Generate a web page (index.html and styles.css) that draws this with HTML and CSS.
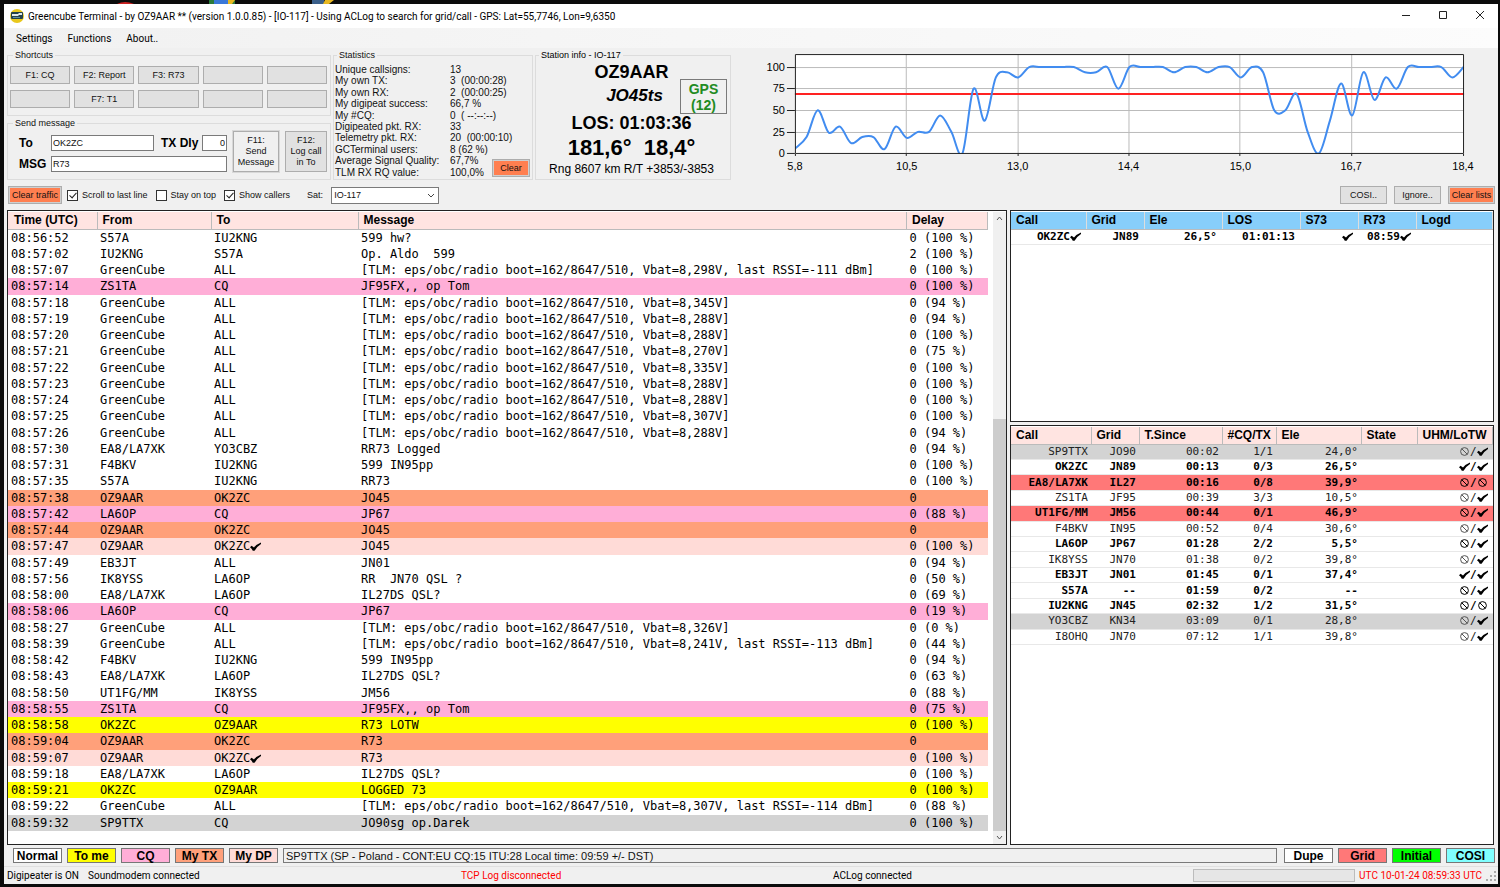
FILE: index.html
```html
<!DOCTYPE html>
<html lang="en">
<head>
    <meta charset="UTF-8">
    <title>Greencube Terminal</title>
    <link rel="stylesheet" href="styles.css">
</head>
<body>

<svg class="desktop-icons" width="400" height="4" viewBox="0 0 400 4" aria-hidden="true">
    <path d="M117 4q8-4 17 0z" fill="#c22"/>
    <path d="M209 0h26v4h-26z" fill="#2a7a3a"/>
    <path d="M214 0h14v4h-14z" fill="#3a78d8"/>
    <path d="M228 0h7l-3 4h-4z" fill="#e8b820"/>
    <path d="M312 0h12v4h-12z" fill="#3a5f8a"/>
    <path d="M325 0h9l-5 4h-6z" fill="#e8b820"/>
</svg>

<svg class="symbols" aria-hidden="true">
    <symbol id="check" viewBox="0 0 11 9">
        <path d="M0 5.200 1.600 3.800 4 5.400Q6.500 2.200 11 0.400V2Q7 4.400 4.600 8.800H2.800Q1.800 6.600 0 5.200z" fill="#000"/>
    </symbol>
    <symbol id="no" viewBox="0 0 11 9">
        <circle cx="5.500" cy="4.500" r="3.900" fill="none" stroke="currentColor"/>
        <path d="M2.800 1.800l5.400 5.400" stroke="currentColor"/>
    </symbol>
</svg>

<div class="window">
    <header class="titlebar">
        <svg class="app-icon" width="14" height="14" viewBox="0 0 14 14" aria-hidden="true">
            <circle cx="7" cy="7" r="7" fill="#e9c81c"/>
            <rect x="1" y="3" width="12" height="7" rx="1" fill="#24424c"/>
            <path d="M2 5h6l1-1h3v2H9l-1 1H2z" fill="#dfe8ea"/>
            <path d="M3 8h7v1H3z" fill="#5b8ca0"/>
        </svg>
        <h1>Greencube Terminal - by OZ9AAR ** (version 1.0.0.85) - [IO-117] - Using ACLog to search for grid/call - GPS: Lat=55,7746, Lon=9,6350</h1>
        <div class="window-buttons">
            <button type="button" aria-label="Minimize"><svg width="10" height="10" viewBox="0 0 10 10"><path d="M1 5.500h8"/></svg></button>
            <button type="button" aria-label="Maximize"><svg width="10" height="10" viewBox="0 0 10 10"><path d="M1.500 1.500h7v7h-7z"/></svg></button>
            <button type="button" aria-label="Close"><svg width="10" height="10" viewBox="0 0 10 10"><path d="M1 1l8 8M9 1l-8 8"/></svg></button>
        </div>
    </header>

    <nav class="menubar">
        <button type="button">Settings</button>
        <button type="button">Functions</button>
        <button type="button">About..</button>
    </nav>

    <section class="top">
        <div class="forms">
            <fieldset class="shortcuts">
                <legend>Shortcuts</legend>
                <button type="button">F1: CQ</button>
                <button type="button">F2: Report</button>
                <button type="button">F3: R73</button>
                <button type="button" aria-label="F4"></button>
                <button type="button" aria-label="F5"></button>
                <button type="button" aria-label="F6"></button>
                <button type="button">F7: T1</button>
                <button type="button" aria-label="F8"></button>
                <button type="button" aria-label="F9"></button>
                <button type="button" aria-label="F10"></button>
            </fieldset>

            <fieldset class="send">
                <legend>Send message</legend>
                <div class="send-fields">
                    <label for="to">To</label>
                    <input type="text" id="to" value="OK2ZC">
                    <label for="delay">TX Dly</label>
                    <input type="text" id="delay" value="0">
                    <label for="msg">MSG</label>
                    <input type="text" id="msg" value="R73">
                </div>
                <button type="button" class="send-btn">F11:<br>Send<br>Message</button>
                <button type="button" class="log-btn">F12:<br>Log call<br>in To</button>
            </fieldset>
        </div>

        <fieldset class="stats">
            <legend>Statistics</legend>
            <dl>
                <dt>Unique callsigns:</dt><dd>13</dd>
                <dt>My own TX:</dt><dd>3  (00:00:28)</dd>
                <dt>My own RX:</dt><dd>2  (00:00:25)</dd>
                <dt>My digipeat success:</dt><dd>66,7 %</dd>
                <dt>My #CQ:</dt><dd>0  ( --:--:--)</dd>
                <dt>Digipeated pkt. RX:</dt><dd>33</dd>
                <dt>Telemetry pkt. RX:</dt><dd>20  (00:00:10)</dd>
                <dt>GCTerminal users:</dt><dd>8 (62 %)</dd>
                <dt>Average Signal Quality:</dt><dd>67,7%</dd>
                <dt>TLM RX RQ value:</dt><dd>100,0%</dd>
            </dl>
            <button type="button" class="clear">Clear</button>
        </fieldset>

        <fieldset class="station">
            <legend>Station info - IO-117</legend>
            <p class="callsign">OZ9AAR</p>
            <p class="locator">JO45ts</p>
            <p class="los">LOS: 01:03:36</p>
            <p class="azel">181,6°  18,4°</p>
            <p class="range">Rng 8607 km R/T +3853/-3853</p>
            <button type="button" class="gps">GPS<br>(12)</button>
        </fieldset>

        <svg class="chart" viewBox="0 0 768 132" role="img" aria-label="Signal quality by elevation">
            <clipPath id="plot"><rect x="64" y="6" width="670" height="100"/></clipPath>
            <rect x="64.500" y="6.500" width="669" height="99" fill="#fff"/>
            <g class="grid">
                <path d="M64 19.500h670M64 40.500h670M64 62.500h670M64 84.500h670"/>
                <path d="M175.500 6v100M287.500 6v100M398.500 6v100M509.500 6v100M621.500 6v100"/>
            </g>
            <path d="M64 46h670" stroke="#f22" stroke-width="2"/>
            <path id="signal" clip-path="url(#plot)"/>
            <path class="axis" d="M64.500 6.500h669v99h-669zM56 19.500h8M56 40.500h8M56 62.500h8M56 84.500h8M56 105.500h8M64.500 106v2M175.500 106v2M287.500 106v2M398.500 106v2M509.500 106v2M621.500 106v2M733.500 106v2"/>
            <g class="y-labels">
                <text x="54" y="23">100</text>
                <text x="54" y="44">75</text>
                <text x="54" y="66">50</text>
                <text x="54" y="88">25</text>
                <text x="54" y="109">0</text>
            </g>
            <g class="x-labels">
                <text x="64" y="122">5,8</text>
                <text x="176" y="122">10,5</text>
                <text x="287" y="122">13,0</text>
                <text x="398" y="122">14,4</text>
                <text x="510" y="122">15,0</text>
                <text x="621" y="122">16,7</text>
                <text x="733" y="122">18,4</text>
            </g>
        </svg>
    </section>

    <section class="toolbar">
        <button type="button" class="clear">Clear traffic</button>
        <label class="tick"><input type="checkbox" checked> Scroll to last line</label>
        <label class="tick"><input type="checkbox"> Stay on top</label>
        <label class="tick"><input type="checkbox" checked> Show callers</label>
        <label class="sat-label" for="sat">Sat:</label>
        <div class="sat">
            <select id="sat"><option>IO-117</option></select>
            <svg width="8" height="5" viewBox="0 0 8 5" aria-hidden="true"><path d="M1 1l3 3 3-3"/></svg>
        </div>
        <div class="list-buttons">
            <button type="button">COSI..</button>
            <button type="button">Ignore..</button>
            <button type="button" class="clear">Clear lists</button>
        </div>
    </section>

    <main class="lists">
        <section class="panel traffic">
            <table class="log">
                <colgroup><col class="c-time"><col class="c-from"><col class="c-to"><col><col class="c-delay"></colgroup>
                <thead>
                    <tr><th>Time (UTC)</th><th>From</th><th>To</th><th>Message</th><th>Delay</th></tr>
                </thead>
                <tbody>
                    <tr><td>08:56:52</td><td>S57A</td><td>IU2KNG</td><td>599 hw?</td><td>0 (100 %)</td></tr>
                    <tr><td>08:57:02</td><td>IU2KNG</td><td>S57A</td><td>Op. Aldo  599</td><td>2 (100 %)</td></tr>
                    <tr><td>08:57:07</td><td>GreenCube</td><td>ALL</td><td>[TLM: eps/obc/radio boot=162/8647/510, Vbat=8,298V, last RSSI=-111 dBm]</td><td>0 (100 %)</td></tr>
                    <tr class="cq"><td>08:57:14</td><td>ZS1TA</td><td>CQ</td><td>JF95FX,, op Tom</td><td>0 (100 %)</td></tr>
                    <tr><td>08:57:18</td><td>GreenCube</td><td>ALL</td><td>[TLM: eps/obc/radio boot=162/8647/510, Vbat=8,345V]</td><td>0 (94 %)</td></tr>
                    <tr><td>08:57:19</td><td>GreenCube</td><td>ALL</td><td>[TLM: eps/obc/radio boot=162/8647/510, Vbat=8,288V]</td><td>0 (94 %)</td></tr>
                    <tr><td>08:57:20</td><td>GreenCube</td><td>ALL</td><td>[TLM: eps/obc/radio boot=162/8647/510, Vbat=8,288V]</td><td>0 (100 %)</td></tr>
                    <tr><td>08:57:21</td><td>GreenCube</td><td>ALL</td><td>[TLM: eps/obc/radio boot=162/8647/510, Vbat=8,270V]</td><td>0 (75 %)</td></tr>
                    <tr><td>08:57:22</td><td>GreenCube</td><td>ALL</td><td>[TLM: eps/obc/radio boot=162/8647/510, Vbat=8,335V]</td><td>0 (100 %)</td></tr>
                    <tr><td>08:57:23</td><td>GreenCube</td><td>ALL</td><td>[TLM: eps/obc/radio boot=162/8647/510, Vbat=8,288V]</td><td>0 (100 %)</td></tr>
                    <tr><td>08:57:24</td><td>GreenCube</td><td>ALL</td><td>[TLM: eps/obc/radio boot=162/8647/510, Vbat=8,288V]</td><td>0 (100 %)</td></tr>
                    <tr><td>08:57:25</td><td>GreenCube</td><td>ALL</td><td>[TLM: eps/obc/radio boot=162/8647/510, Vbat=8,307V]</td><td>0 (100 %)</td></tr>
                    <tr><td>08:57:26</td><td>GreenCube</td><td>ALL</td><td>[TLM: eps/obc/radio boot=162/8647/510, Vbat=8,288V]</td><td>0 (94 %)</td></tr>
                    <tr><td>08:57:30</td><td>EA8/LA7XK</td><td>YO3CBZ</td><td>RR73 Logged</td><td>0 (94 %)</td></tr>
                    <tr><td>08:57:31</td><td>F4BKV</td><td>IU2KNG</td><td>599 IN95pp</td><td>0 (100 %)</td></tr>
                    <tr><td>08:57:35</td><td>S57A</td><td>IU2KNG</td><td>RR73</td><td>0 (100 %)</td></tr>
                    <tr class="mytx"><td>08:57:38</td><td>OZ9AAR</td><td>OK2ZC</td><td>JO45</td><td>0</td></tr>
                    <tr class="cq"><td>08:57:42</td><td>LA6OP</td><td>CQ</td><td>JP67</td><td>0 (88 %)</td></tr>
                    <tr class="mytx"><td>08:57:44</td><td>OZ9AAR</td><td>OK2ZC</td><td>JO45</td><td>0</td></tr>
                    <tr class="mydp"><td>08:57:47</td><td>OZ9AAR</td><td>OK2ZC<svg class="mark"><use href="#check"/></svg></td><td>JO45</td><td>0 (100 %)</td></tr>
                    <tr><td>08:57:49</td><td>EB3JT</td><td>ALL</td><td>JN01</td><td>0 (94 %)</td></tr>
                    <tr><td>08:57:56</td><td>IK8YSS</td><td>LA6OP</td><td>RR  JN70 QSL ?</td><td>0 (50 %)</td></tr>
                    <tr><td>08:58:00</td><td>EA8/LA7XK</td><td>LA6OP</td><td>IL27DS QSL?</td><td>0 (69 %)</td></tr>
                    <tr class="cq"><td>08:58:06</td><td>LA6OP</td><td>CQ</td><td>JP67</td><td>0 (19 %)</td></tr>
                    <tr><td>08:58:27</td><td>GreenCube</td><td>ALL</td><td>[TLM: eps/obc/radio boot=162/8647/510, Vbat=8,326V]</td><td>0 (0 %)</td></tr>
                    <tr><td>08:58:39</td><td>GreenCube</td><td>ALL</td><td>[TLM: eps/obc/radio boot=162/8647/510, Vbat=8,241V, last RSSI=-113 dBm]</td><td>0 (44 %)</td></tr>
                    <tr><td>08:58:42</td><td>F4BKV</td><td>IU2KNG</td><td>599 IN95pp</td><td>0 (94 %)</td></tr>
                    <tr><td>08:58:43</td><td>EA8/LA7XK</td><td>LA6OP</td><td>IL27DS QSL?</td><td>0 (63 %)</td></tr>
                    <tr><td>08:58:50</td><td>UT1FG/MM</td><td>IK8YSS</td><td>JM56</td><td>0 (88 %)</td></tr>
                    <tr class="cq"><td>08:58:55</td><td>ZS1TA</td><td>CQ</td><td>JF95FX,, op Tom</td><td>0 (75 %)</td></tr>
                    <tr class="tome"><td>08:58:58</td><td>OK2ZC</td><td>OZ9AAR</td><td>R73 LOTW</td><td>0 (100 %)</td></tr>
                    <tr class="mytx"><td>08:59:04</td><td>OZ9AAR</td><td>OK2ZC</td><td>R73</td><td>0</td></tr>
                    <tr class="mydp"><td>08:59:07</td><td>OZ9AAR</td><td>OK2ZC<svg class="mark"><use href="#check"/></svg></td><td>R73</td><td>0 (100 %)</td></tr>
                    <tr><td>08:59:18</td><td>EA8/LA7XK</td><td>LA6OP</td><td>IL27DS QSL?</td><td>0 (100 %)</td></tr>
                    <tr class="tome"><td>08:59:21</td><td>OK2ZC</td><td>OZ9AAR</td><td>LOGGED 73</td><td>0 (100 %)</td></tr>
                    <tr><td>08:59:22</td><td>GreenCube</td><td>ALL</td><td>[TLM: eps/obc/radio boot=162/8647/510, Vbat=8,307V, last RSSI=-114 dBm]</td><td>0 (88 %)</td></tr>
                    <tr class="selected"><td>08:59:32</td><td>SP9TTX</td><td>CQ</td><td>JO90sg op.Darek</td><td>0 (100 %)</td></tr>
                </tbody>
            </table>
            <div class="scrollbar">
                <svg width="7" height="5" viewBox="0 0 7 5" aria-hidden="true"><path d="M1 4l2.500-3L6 4"/></svg>
                <div class="track"><div class="thumb"></div></div>
                <svg width="7" height="5" viewBox="0 0 7 5" aria-hidden="true"><path d="M1 1l2.500 3L6 1"/></svg>
            </div>
        </section>

        <div class="side">
            <section class="panel qso">
                <table class="calls">
                    <colgroup><col class="w75"><col class="w58"><col class="w78"><col class="w78"><col class="w58"><col class="w58"><col></colgroup>
                    <thead>
                        <tr><th>Call</th><th>Grid</th><th>Ele</th><th>LOS</th><th>S73</th><th>R73</th><th>Logd</th></tr>
                    </thead>
                    <tbody>
                        <tr class="new"><td>OK2ZC<svg class="mark"><use href="#check"/></svg></td><td>JN89</td><td>26,5°</td><td>01:01:13</td><td><svg class="mark"><use href="#check"/></svg></td><td>08:59<svg class="mark"><use href="#check"/></svg></td><td></td></tr>
                    </tbody>
                </table>
            </section>

            <section class="panel heard">
                <table class="calls">
                    <colgroup><col class="w80"><col class="w48"><col class="w83"><col class="w54"><col class="w85"><col class="w56"><col></colgroup>
                    <thead>
                        <tr><th>Call</th><th>Grid</th><th>T.Since</th><th>#CQ/TX</th><th>Ele</th><th>State</th><th>UHM/LoTW</th></tr>
                    </thead>
                    <tbody>
                        <tr class="selected"><td>SP9TTX</td><td>JO90</td><td>00:02</td><td>1/1</td><td>24,0°</td><td></td><td><svg class="mark"><use href="#no"/></svg>/<svg class="mark"><use href="#check"/></svg></td></tr>
                        <tr class="new"><td>OK2ZC</td><td>JN89</td><td>00:13</td><td>0/3</td><td>26,5°</td><td></td><td><svg class="mark"><use href="#check"/></svg>/<svg class="mark"><use href="#check"/></svg></td></tr>
                        <tr class="new newgrid"><td>EA8/LA7XK</td><td>IL27</td><td>00:16</td><td>0/8</td><td>39,9°</td><td></td><td><svg class="mark"><use href="#no"/></svg>/<svg class="mark"><use href="#no"/></svg></td></tr>
                        <tr><td>ZS1TA</td><td>JF95</td><td>00:39</td><td>3/3</td><td>10,5°</td><td></td><td><svg class="mark"><use href="#no"/></svg>/<svg class="mark"><use href="#check"/></svg></td></tr>
                        <tr class="new newgrid"><td>UT1FG/MM</td><td>JM56</td><td>00:44</td><td>0/1</td><td>46,9°</td><td></td><td><svg class="mark"><use href="#no"/></svg>/<svg class="mark"><use href="#check"/></svg></td></tr>
                        <tr><td>F4BKV</td><td>IN95</td><td>00:52</td><td>0/4</td><td>30,6°</td><td></td><td><svg class="mark"><use href="#no"/></svg>/<svg class="mark"><use href="#check"/></svg></td></tr>
                        <tr class="new"><td>LA6OP</td><td>JP67</td><td>01:28</td><td>2/2</td><td>5,5°</td><td></td><td><svg class="mark"><use href="#no"/></svg>/<svg class="mark"><use href="#check"/></svg></td></tr>
                        <tr><td>IK8YSS</td><td>JN70</td><td>01:38</td><td>0/2</td><td>39,8°</td><td></td><td><svg class="mark"><use href="#no"/></svg>/<svg class="mark"><use href="#check"/></svg></td></tr>
                        <tr class="new"><td>EB3JT</td><td>JN01</td><td>01:45</td><td>0/1</td><td>37,4°</td><td></td><td><svg class="mark"><use href="#check"/></svg>/<svg class="mark"><use href="#check"/></svg></td></tr>
                        <tr class="new"><td>S57A</td><td>--</td><td>01:59</td><td>0/2</td><td>--</td><td></td><td><svg class="mark"><use href="#no"/></svg>/<svg class="mark"><use href="#check"/></svg></td></tr>
                        <tr class="new"><td>IU2KNG</td><td>JN45</td><td>02:32</td><td>1/2</td><td>31,5°</td><td></td><td><svg class="mark"><use href="#no"/></svg>/<svg class="mark"><use href="#no"/></svg></td></tr>
                        <tr class="selected"><td>YO3CBZ</td><td>KN34</td><td>03:09</td><td>0/1</td><td>28,8°</td><td></td><td><svg class="mark"><use href="#no"/></svg>/<svg class="mark"><use href="#check"/></svg></td></tr>
                        <tr><td>I8OHQ</td><td>JN70</td><td>07:12</td><td>1/1</td><td>39,8°</td><td></td><td><svg class="mark"><use href="#no"/></svg>/<svg class="mark"><use href="#check"/></svg></td></tr>
                    </tbody>
                </table>
            </section>
        </div>
    </main>

    <section class="colour-keys">
        <span class="key">Normal</span>
        <span class="key tome">To me</span>
        <span class="key cq">CQ</span>
        <span class="key mytx">My TX</span>
        <span class="key mydp">My DP</span>
        <input type="text" class="call-info" aria-label="Call info" readonly value="SP9TTX (SP - Poland - CONT:EU CQ:15 ITU:28 Local time: 09:59 +/- DST)">
        <span class="key">Dupe</span>
        <span class="key newgrid">Grid</span>
        <span class="key initial">Initial</span>
        <span class="key cosi">COSI</span>
    </section>

    <footer class="statusbar">
        <span class="s-digi">Digipeater is ON</span>
        <span class="s-modem">Soundmodem connected</span>
        <span class="s-tcp alert">TCP Log disconnected</span>
        <span class="s-aclog">ACLog connected</span>
        <div class="progress"></div>
        <span class="alert">UTC 10-01-24 08:59:33 UTC</span>
        <svg class="grip" width="11" height="11" viewBox="0 0 11 11" aria-hidden="true">
            <path d="M9 1h2v2h-2zM9 5h2v2h-2zM9 9h2v2h-2zM5 5h2v2h-2zM5 9h2v2h-2zM1 9h2v2h-2z" fill="#aaa"/>
        </svg>
    </footer>
</div>

<script src="chart.js"></script>
</body>
</html>
```
FILE: chart.js
```js
// signal quality (%) for each received packet, oldest first
const quality = [
    6, 19, 50, 24, 31, 12, 19, 19, 5, 31, 18, 25, 25, 44, 25, 0, 75, 38, 88, 94,
    88, 100, 100, 100, 100, 100, 94, 94, 100, 75, 100, 100, 100, 100, 94, 100,
    100, 94, 100, 100, 88, 100, 94, 50, 50, 69, 25, 0, 38, 81, 44, 94, 62, 88,
    75, 100, 100, 100, 100, 88, 100
];

const points = quality.map((q, i) => [64.5 + i * 669 / (quality.length - 1), 105.5 - q * 0.865]);

// cardinal spline through all points
let d = `M${points[0]}`;
for (let i = 0; i < points.length - 1; i++) {
    const p0 = points[i - 1] || points[i];
    const p1 = points[i];
    const p2 = points[i + 1];
    const p3 = points[i + 2] || p2;
    d += `C${p1[0] + (p2[0] - p0[0]) / 6},${p1[1] + (p2[1] - p0[1]) / 6}`;
    d += ` ${p2[0] - (p3[0] - p1[0]) / 6},${p2[1] - (p3[1] - p1[1]) / 6} ${p2}`;
}
document.getElementById('signal').setAttribute('d', d);
```
FILE: styles.css
```css
* {
    margin: 0;
    padding: 0;
    box-sizing: border-box;
}

body {
    background-color: #0b0b0b;
    font-family: "Liberation Sans", Arial, sans-serif;
    font-size: 9px;
    color: #111;
}

.desktop-icons {
    position: absolute;
    top: 0;
    left: 0;
}

.symbols {
    position: absolute;
    width: 0;
    height: 0;
}

.window {
    display: flex;
    flex-direction: column;
    min-height: 100vh;
    border: solid transparent;
    border-width: 4px 2px 3px 4px;
    background-color: #f0f0f0;
    background-clip: padding-box;
}

button, input, select {
    font: inherit;
    color: inherit;
}

button {
    background-color: #e1e1e1;
    border: 1px solid #adadad;
    line-height: 11px;
}

input, select {
    background-color: #fff;
    border: 1px solid #7a7a7a;
    border-radius: 0;
}

/* title and menu */
.titlebar {
    display: flex;
    align-items: center;
    gap: 4px;
    height: 24px;
    padding-left: 6px;
    background-color: #fff;
}

h1 {
    flex: 1;
    font-family: Roboto, "Noto Sans", sans-serif;
    font-size: 10px;
    font-weight: normal;
    color: #000;
}

.window-buttons {
    display: flex;
}

.window-buttons button {
    width: 37px;
    height: 22px;
    border: none;
    background: none;
}

.window-buttons svg {
    fill: none;
    stroke: #222;
}

.menubar {
    display: flex;
    gap: 15px;
    height: 20px;
    padding-left: 12px;
    background: linear-gradient(to right, #f1f1f1, #fcfcfc);
}

.menubar button {
    border: none;
    background: none;
    font-family: Roboto, "Noto Sans", sans-serif;
    font-size: 10px;
    color: #000;
}

/* top panels */
.top {
    display: flex;
    gap: 2px;
    height: 132px;
    padding-left: 3px;
}

fieldset {
    min-width: 0;
    border: 1px solid #dcdcdc;
}

legend {
    margin-left: 3px;
    padding: 0 2px;
    line-height: 14px;
    text-align: left;
}

.forms {
    display: grid;
    grid-template-rows: 68px 64px;
    width: 324px;
}

.shortcuts {
    display: grid;
    grid-template-columns: repeat(5, 1fr);
    grid-auto-rows: 18px;
    gap: 6px 4px;
    padding: 4px 3px 0 2px;
}

.send {
    display: flex;
    gap: 6px;
    padding: 1px 3px 7px 2px;
}

.send-fields {
    flex: 1;
    display: grid;
    grid-template-columns: 32px 1fr 48px 25px;
    grid-auto-rows: 16px;
    gap: 5px 0;
    padding: 4px 0 0 9px;
}

.send-fields label {
    font-size: 12px;
    font-weight: bold;
    line-height: 16px;
    color: #000;
}

.send-fields label[for="delay"] {
    padding-left: 7px;
}

.send-fields input {
    min-width: 0;
    padding: 0 1px;
}

#msg {
    grid-column: 2 / 5;
}

#delay {
    text-align: right;
}

.send-btn {
    width: 46px;
    background-color: #f0f0f0;
    outline: 1px solid #d8d8d8;
}

.log-btn {
    width: 42px;
}

.stats {
    position: relative;
    width: 200px;
}

.stats dl {
    display: grid;
    grid-template-columns: 115px 1fr;
    grid-template-rows: repeat(10, 1fr);
    height: 117px;
    padding: 2px 0 1px 1px;
    font-size: 10px;
    line-height: 11px;
    white-space: pre;
}

button.clear {
    border: 2px solid #cfcfcf;
    outline: 1px solid #adadad;
    outline-offset: -1px;
    background-color: #ff7f50;
}

.stats .clear {
    position: absolute;
    right: 2px;
    bottom: 2px;
    width: 38px;
    height: 18px;
}

.station {
    position: relative;
    width: 196px;
    padding-right: 3px;
    text-align: center;
    color: #000;
}

.station p {
    font-size: 18px;
    line-height: 24px;
    font-weight: bold;
    white-space: pre;
}

.station .callsign {
    line-height: 20px;
}

.station .locator {
    padding-left: 6px;
    font-size: 17px;
    line-height: 28px;
    font-style: italic;
}

.station .los {
    line-height: 27px;
}

.station .azel {
    font-size: 22px;
    line-height: 22px;
}

.station .range {
    font-size: 12px;
    line-height: 20px;
    font-weight: normal;
}

.gps {
    position: absolute;
    top: 17px;
    right: 3px;
    width: 47px;
    height: 35px;
    border-color: #7a7a7a;
    background-color: #f0f0f0;
    font-size: 14px;
    line-height: 16px;
    font-weight: bold;
    color: #228b22;
}

.chart {
    flex: 1;
    min-width: 0;
    margin-left: -2px;
    font-size: 11px;
}

.chart .grid {
    stroke: #bbb;
}

.chart .axis {
    fill: none;
    stroke: #222;
}

#signal {
    fill: none;
    stroke: #418cf0;
    stroke-width: 2;
}

.y-labels {
    text-anchor: end;
}

.x-labels {
    text-anchor: middle;
}

/* toolbar */
.toolbar {
    display: flex;
    align-items: center;
    gap: 8px;
    height: 30px;
    padding: 0 3px 0 4px;
}

.toolbar button {
    height: 18px;
}

.toolbar > .clear {
    width: 54px;
    margin-right: -3px;
    white-space: nowrap;
}

.tick {
    display: flex;
    align-items: center;
    gap: 4px;
}

.tick input {
    appearance: none;
    width: 11px;
    height: 11px;
    border: 1px solid #333;
}

.tick input:checked::after {
    content: "";
    display: block;
    width: 3px;
    height: 6px;
    margin: 0 0 0 3px;
    border: solid #222;
    border-width: 0 1px 1px 0;
    transform: rotate(42deg);
}

.sat-label {
    padding-left: 9px;
}

.sat {
    position: relative;
}

.sat select {
    appearance: none;
    width: 108px;
    height: 17px;
    padding-left: 2px;
}

.sat svg {
    position: absolute;
    top: 6px;
    right: 4px;
    fill: none;
    stroke: #444;
}

.list-buttons {
    display: flex;
    gap: 7px;
    margin-left: auto;
}

.list-buttons button {
    width: 47px;
    white-space: nowrap;
}

/* lists */
.lists {
    flex: 1;
    display: flex;
    gap: 3px;
    padding: 0 4px 0 3px;
}

.panel {
    border: 1px solid #222;
    background-color: #fff;
}

.traffic {
    flex: 1;
    display: flex;
    align-items: flex-start;
    padding-top: 1px;
}

.side {
    display: flex;
    flex-direction: column;
    gap: 3px;
    width: 484px;
}

.qso {
    height: 212px;
    padding-top: 1px;
}

.heard {
    flex: 1;
    padding-top: 1px;
}

table {
    width: 100%;
    table-layout: fixed;
    border-collapse: collapse;
    color: #000;
}

th {
    height: 17px;
    padding-left: 5px;
    border-bottom: 1px solid #bbb;
    border-right: 1px solid #bbb;
    background-color: #ffe4e1;
    font-size: 12px;
    line-height: 16px;
    text-align: left;
    white-space: nowrap;
}

.log {
    flex: 1;
    height: 619px;
}

.log th:first-child {
    padding-left: 6px;
}

td {
    white-space: pre;
    font-family: "DejaVu Sans Mono", Consolas, monospace;
}

.log td {
    padding-left: 3px;
    font-size: 12px;
    line-height: 16px;
}

.c-time {
    width: 89px;
}

.c-from {
    width: 114px;
}

.c-to {
    width: 147px;
}

.c-delay {
    width: 81px;
}

.calls td {
    padding-right: 3px;
    border-bottom: 1px solid #e8e8e8;
    font-size: 11px;
    line-height: 14px;
    text-align: right;
    color: #222;
}

.calls .new td {
    font-weight: bold;
    color: #000;
}

.qso td,
.calls td:last-child {
    padding-right: 5px;
}

.qso th {
    border-right-color: #ddd;
    background-color: #87cefa;
}

.heard table {
    height: 218px;
}

.w48 { width: 48px; }
.w54 { width: 54px; }
.w56 { width: 56px; }
.w58 { width: 58px; }
.w75 { width: 75px; }
.w78 { width: 78px; }
.w80 { width: 80px; }
.w83 { width: 83px; }
.w85 { width: 85px; }

.mark {
    width: 11px;
    height: 9px;
    vertical-align: -1px;
}

.calls tr:not(.new) .mark {
    color: #555;
}

/* row and key colours */
.selected {
    background-color: #d3d3d3;
}

.cq {
    background-color: #ffaed7;
}

.mytx {
    background-color: #ffa07a;
}

.mydp {
    background-color: #ffdbd7;
}

.tome {
    background-color: #ffff00;
}

.newgrid {
    background-color: #ff7878;
}

.initial {
    background-color: #00ff00;
}

.cosi {
    background-color: #80ffff;
}

.scrollbar {
    align-self: stretch;
    display: flex;
    flex-direction: column;
    align-items: center;
    width: 13px;
    margin-left: 5px;
    padding: 4px 0;
    background-color: #f0f0f0;
}

.scrollbar svg {
    fill: none;
    stroke: #555;
}

.track {
    flex: 1;
    display: flex;
    align-items: flex-end;
    width: 100%;
    padding: 4px 0;
}

.thumb {
    width: 100%;
    height: 68%;
    background-color: #cdcdcd;
}

/* bottom bars */
.colour-keys {
    display: flex;
    align-items: center;
    gap: 5px;
    height: 21px;
    padding: 0 3px 0 9px;
}

.key {
    width: 49px;
    height: 15px;
    border: 1px solid #777;
    font-size: 12px;
    line-height: 14px;
    font-weight: bold;
    text-align: center;
    color: #000;
}

.key:not([class*=" "]) {
    background-color: #fff;
}

.call-info {
    flex: 1;
    height: 15px;
    margin-right: 2px;
    padding: 0 2px;
    background-color: #f0f0f0;
    font-size: 11px;
}

.statusbar {
    display: flex;
    align-items: center;
    height: 18px;
    padding: 0 2px 0 3px;
    border-top: 1px solid #e0e0e0;
    font-family: Roboto, "Noto Sans", sans-serif;
    font-size: 10px;
    color: #000;
    white-space: nowrap;
}

.s-digi {
    width: 81px;
}

.s-modem {
    width: 373px;
}

.s-tcp {
    width: 372px;
}

.s-aclog {
    flex: 1;
}

.alert {
    color: #f00;
}

.progress {
    width: 162px;
    height: 13px;
    margin-right: 4px;
    border: 1px solid #bcbcbc;
    background-color: #e6e6e6;
}

.grip {
    margin-left: 3px;
}
```
